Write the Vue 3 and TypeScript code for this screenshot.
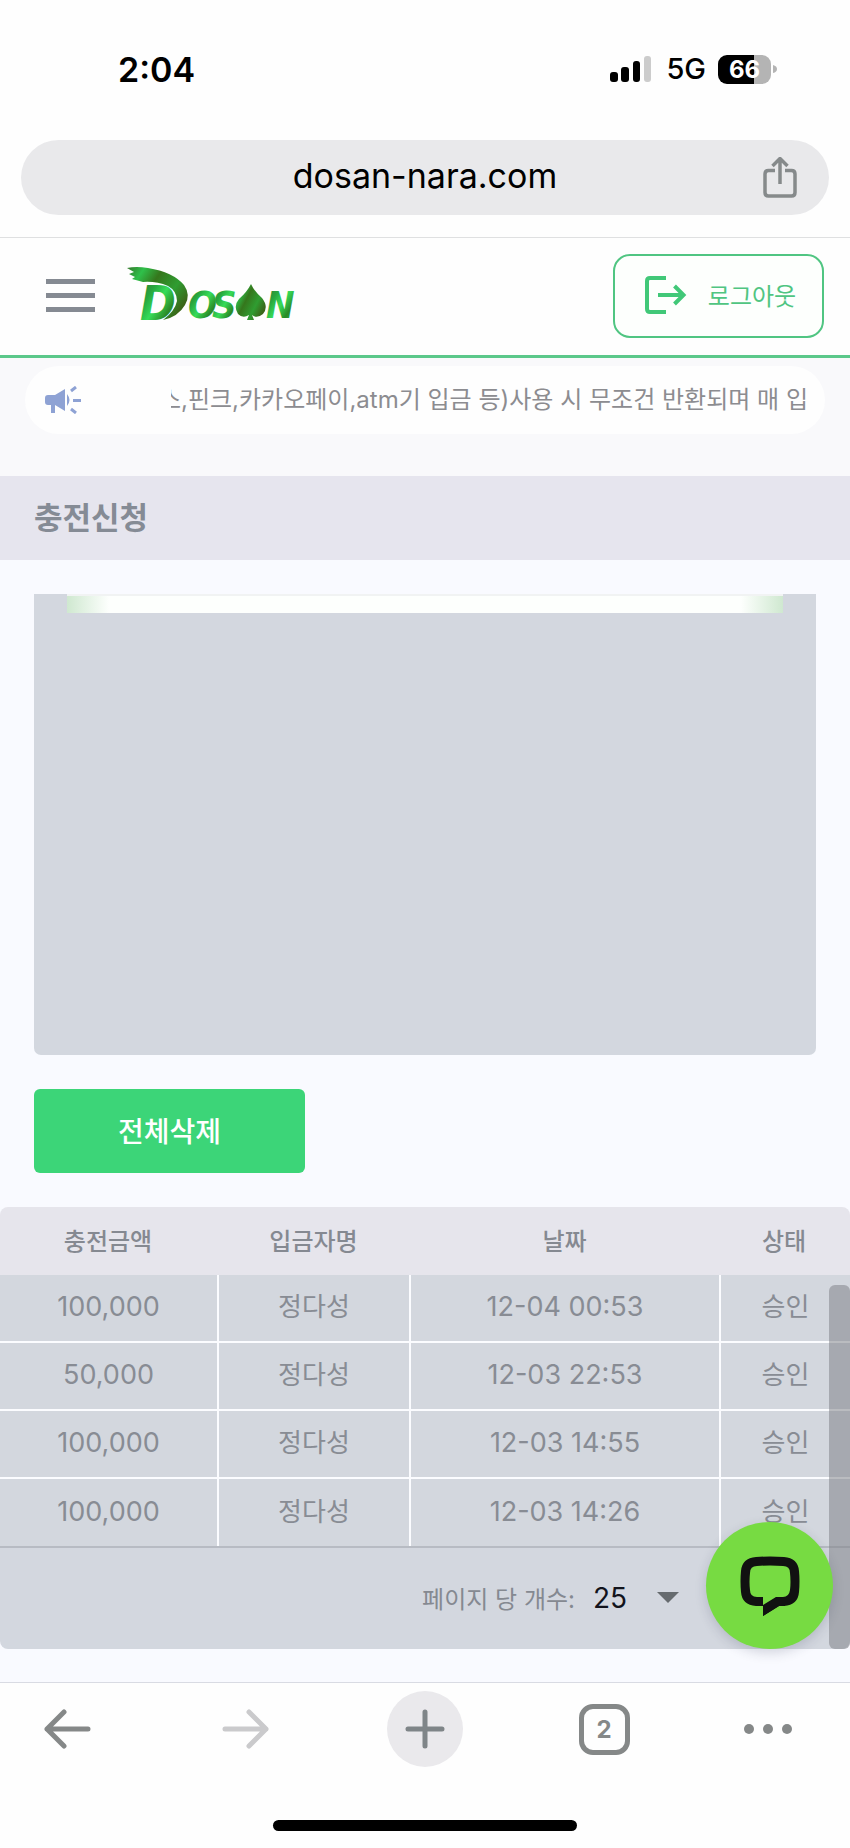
<script setup lang="ts">
import { ref } from 'vue'

interface Deposit {
  amount: string
  name: string
  date: string
  status: string
}

const deposits: Deposit[] = [
  { amount: '100,000', name: '정다성', date: '12-04 00:53', status: '승인' },
  { amount: '50,000', name: '정다성', date: '12-03 22:53', status: '승인' },
  { amount: '100,000', name: '정다성', date: '12-03 14:55', status: '승인' },
  { amount: '100,000', name: '정다성', date: '12-03 14:26', status: '승인' },
]

const pageSize = ref('25')
</script>

<template>
  <div class="phone">
    <div class="status-bar">
      <span class="clock">2:04</span>
      <div class="status-icons">
        <svg class="signal" width="42" height="28" viewBox="0 0 42 28" aria-hidden="true">
          <rect x="0" y="17" width="8" height="10" rx="3" fill="#000" />
          <rect x="11" y="12" width="8" height="15" rx="3" fill="#000" />
          <rect x="23" y="6" width="7" height="21" rx="3" fill="#000" />
          <rect x="34" y="1" width="7" height="26" rx="3" fill="#ccc" />
        </svg>
        <span class="network">5G</span>
        <div class="battery"><span class="battery-level">66</span></div>
        <svg width="4" height="10" viewBox="0 0 4 10" aria-hidden="true"><path d="M0 1Q4 2 4 5T0 9Z" fill="#b4b4b4" /></svg>
      </div>
    </div>

    <div class="address-row">
      <div class="address">
        <span class="host">dosan-nara.com</span>
        <button class="icon-button share" type="button" aria-label="공유">
          <svg width="34" height="42" viewBox="0 0 34 42" fill="none" stroke="#868a8b" stroke-width="3.500" stroke-linejoin="round">
            <path d="M12 13.500H5.500Q2 13.500 2 17V35.500Q2 39 5.500 39H28.500Q32 39 32 35.500V17Q32 13.500 28.500 13.500H22" />
            <path d="M17 27V2M9.500 9 17 1.500 24.500 9" />
          </svg>
        </button>
      </div>
    </div>

    <header class="site-header">
      <button class="icon-button menu" type="button" aria-label="메뉴">
        <svg width="49" height="33" viewBox="0 0 49 33" fill="#858a92"><path d="M0 0H49V5H0ZM0 14H49V19H0ZM0 28H49V33H0Z" /></svg>
      </button>
      <a class="logo" href="#" aria-label="Dosan">
        <svg width="180" height="70" viewBox="0 -7 180 70">
          <defs>
            <linearGradient id="leaf" x1="0" y1="0" x2="1" y2="1">
              <stop offset="0" stop-color="#35702a" />
              <stop offset="0.3" stop-color="#27a63f" />
              <stop offset="0.5" stop-color="#37dc58" />
              <stop offset="0.72" stop-color="#2b8a26" />
              <stop offset="1" stop-color="#31cf4e" />
            </linearGradient>
            <linearGradient id="brush" x1="0" y1="0" x2="1" y2="0.6">
              <stop offset="0" stop-color="#35752a" />
              <stop offset="0.22" stop-color="#2fc04a" />
              <stop offset="0.45" stop-color="#35761c" />
              <stop offset="0.75" stop-color="#2f9d31" />
              <stop offset="1" stop-color="#3b6619" />
            </linearGradient>
          </defs>
          <text class="logo-initial" x="14" y="54" fill="url(#leaf)">D</text>
          <path d="M1 2Q10 0 22 2Q47 6 58 19Q65 29 59 39Q52 51 37 54Q49 45 51 35Q51 25 42 20Q30 15 17 16L6 13L9 11L3 8L8 6Z" fill="url(#brush)" />
          <text class="logo-text" x="62" y="52" fill="url(#leaf)">O</text>
          <text class="logo-text" x="86" y="52" fill="url(#leaf)">S</text>
          <path d="M125 18Q128 25 136 32Q143 41 137 48Q131 53 126 49L128 54H121L123 49Q117 53 112 48Q107 40 113 33Q121 26 125 18Z" fill="url(#brush)" />
          <text class="logo-text" x="140" y="52" fill="url(#leaf)">N</text>
        </svg>
      </a>
      <button class="logout" type="button">
        <svg width="42" height="38" viewBox="0 0 42 38" fill="none" stroke="#41c878" stroke-width="4">
          <path d="M21 2H5Q2 2 2 5V33Q2 36 5 36H21" /><path d="M13 19H38M29.500 10 38.500 19 29.500 28" />
        </svg>
        <span>로그아웃</span>
      </button>
    </header>

    <main>
      <div class="notice-area">
        <div class="notice">
          <svg class="horn" width="36" height="28" viewBox="0 0 36 28" fill="#8ea2d4">
            <path d="M3 9H10L20 3V25L10 19V27H6V19H3Q0 19 0 16V12Q0 9 3 9ZM22 8Q27 14 22 20Z" />
            <path d="M26 5 31 1M28 14.500H36M26 23 31 27" stroke="#8ea2d4" stroke-width="3" />
          </svg>
          <p class="ticker"><span>스,핀크,카카오페이,atm기 입금 등)사용 시 무조건 반환되며 매 입</span></p>
        </div>
      </div>

      <h1 class="page-title">충전신청</h1>

      <div class="content">
        <div class="panel"><div class="panel-glow"></div></div>
        <button class="delete-all" type="button">전체삭제</button>
      </div>

      <section class="history">
        <table>
          <colgroup><col class="c-amount" /><col class="c-name" /><col class="c-date" /><col class="c-status" /></colgroup>
          <thead>
            <tr><th scope="col">충전금액</th><th scope="col">입금자명</th><th scope="col">날짜</th><th scope="col">상태</th></tr>
          </thead>
          <tbody>
            <tr v-for="(d, i) in deposits" :key="i">
              <td class="number">{{ d.amount }}</td>
              <td>{{ d.name }}</td>
              <td class="number">{{ d.date }}</td>
              <td>{{ d.status }}</td>
            </tr>
          </tbody>
        </table>
        <div class="pager">
          <label for="page-size">페이지 당 개수:</label>
          <div class="select-wrap">
            <select id="page-size" v-model="pageSize">
              <option>10</option>
              <option>25</option>
              <option>50</option>
            </select>
            <svg width="22" height="12" viewBox="0 0 22 12" aria-hidden="true"><path d="M0 0H22L11 11Z" fill="#666b6f" /></svg>
          </div>
        </div>
        <div class="scroll-thumb"></div>
        <button class="chat" type="button" aria-label="채팅">
          <svg width="60" height="60" viewBox="0 0 60 60">
            <path d="M16 1Q30 0 44 1Q58 2 59 15Q60 25 59 36Q58 49 44 50H39L23 60V41H32L23 60V50H16Q2 49 1 36Q0 25 1 15Q2 2 16 1Z" fill="#111" />
            <path d="M17 10Q30 9 43 10Q50 10 50 17Q51 26 50 34Q49 41 43 41H36L23 49V41H17Q10 41 10 34Q9 26 10 17Q10 10 17 10Z" fill="#77db42" />
            <path d="M23 41V60L39 50H45V41H37L23 50Z" fill="#111" />
          </svg>
        </button>
      </section>
    </main>

    <footer class="browser-bar">
      <nav class="tools" aria-label="브라우저">
        <button class="icon-button tool" type="button" aria-label="뒤로">
          <svg width="48" height="40" viewBox="0 0 48 40" fill="none" stroke="#858888" stroke-width="5" stroke-linecap="round" stroke-linejoin="round"><path d="M45 20H4M21 3 4 20 21 37" /></svg>
        </button>
        <button class="icon-button tool" type="button" aria-label="앞으로">
          <svg width="48" height="40" viewBox="0 0 48 40" fill="none" stroke="#cacacc" stroke-width="5" stroke-linecap="round" stroke-linejoin="round"><path d="M3 20H44M27 3 44 20 27 37" /></svg>
        </button>
        <button class="icon-button tool add" type="button" aria-label="새 탭">
          <svg width="40" height="40" viewBox="0 0 40 40" fill="none" stroke="#7f8588" stroke-width="5" stroke-linecap="round"><path d="M3 20H37M20 3V37" /></svg>
        </button>
        <button class="icon-button tool" type="button" aria-label="탭 2개"><span class="tabs">2</span></button>
        <button class="icon-button tool more" type="button" aria-label="더보기">
          <svg width="48" height="10" viewBox="0 0 48 10" fill="#858888"><circle cx="5" cy="5" r="5" /><circle cx="24" cy="5" r="5" /><circle cx="43" cy="5" r="5" /></svg>
        </button>
      </nav>
      <div class="home-indicator"></div>
    </footer>
  </div>
</template>

<style>
body {
  margin: 0;
  background: #fefefe;
}
</style>

<style scoped>
.phone,
.phone button,
.phone select {
  font-family: Inter, "Noto Sans CJK KR", sans-serif;
}

.phone {
  min-height: 100vh;
  display: flex;
  flex-direction: column;
  color: #858991;
}

.phone * {
  box-sizing: border-box;
}

svg {
  display: block;
  flex: none;
}

button {
  padding: 0;
  border: 0;
  cursor: pointer;
}

.icon-button {
  display: flex;
  align-items: center;
  justify-content: center;
  background: none;
}

.status-bar {
  height: 140px;
  padding: 0 73px 2px 118px;
  display: flex;
  align-items: center;
  justify-content: space-between;
  color: #000;
}

.clock {
  font-size: 34px;
  font-weight: 600;
}

.status-icons {
  display: flex;
  align-items: center;
  gap: 2px;
}

.signal {
  margin-right: 12px;
}

.network {
  font-size: 29px;
  font-weight: 500;
  line-height: 30px;
  margin-right: 10px;
}

.battery {
  width: 53px;
  height: 29px;
  border-radius: 9px;
  display: flex;
  align-items: center;
  justify-content: center;
  background: linear-gradient(90deg, #000 68%, #b4b4b4 68%);
}

.battery-level {
  color: #fff;
  font-size: 24px;
  font-weight: 700;
  line-height: 29px;
}

.address-row {
  padding: 0 21px 22px;
  border-bottom: 1px solid #dfe0e1;
}

.address {
  height: 75px;
  border-radius: 38px;
  background: #e9e9eb;
  display: grid;
  grid-template-columns: 1fr auto 1fr;
  align-items: center;
}

.host {
  grid-column: 2;
  padding-bottom: 4px;
  color: #000;
  font-size: 34px;
  line-height: 40px;
}

.share {
  justify-self: end;
  margin-right: 32px;
}

.site-header {
  height: 120px;
  padding: 0 26px 2px 46px;
  border-bottom: 3px solid #5bc88a;
  background: #fefefe;
  display: flex;
  align-items: center;
}

.logo {
  margin-left: 31px;
  padding-bottom: 4px;
}

.logo-initial {
  font: italic 700 48px "DejaVu Sans Condensed", "DejaVu Sans", sans-serif;
}

.logo-text {
  font: italic 700 38px "Liberation Sans Narrow", "DejaVu Sans Condensed", sans-serif;
}

.logout {
  margin-left: auto;
  width: 211px;
  height: 84px;
  padding: 0 0 2px 4px;
  border: 2px solid #50c582;
  border-radius: 17px;
  background: #fdfffd;
  color: #50c582;
  font-size: 24px;
  display: flex;
  align-items: center;
  justify-content: center;
  gap: 21px;
}

main {
  background: #f9faff;
}

.notice-area {
  padding: 8px 25px 42px;
  background: #f9f9fb;
}

.notice {
  height: 68px;
  padding: 0 17px 0 20px;
  border-radius: 34px;
  background: #fefefe;
  display: flex;
  align-items: center;
}

.ticker {
  flex: 1;
  min-width: 0;
  margin: 0 0 0 90px;
  overflow: hidden;
  display: flex;
  justify-content: flex-end;
  color: #8c8c90;
  font-size: 24px;
  line-height: 36px;
  white-space: nowrap;
}

.page-title {
  margin: 0;
  padding: 0 34px;
  background: #e6e5ee;
  color: #858b95;
  font-size: 31px;
  font-weight: 700;
  line-height: 84px;
}

.content {
  padding: 34px;
}

.panel {
  height: 461px;
  padding: 0 33px;
  border-radius: 0 0 7px 7px;
  background: #d3d7df;
}

.panel-glow {
  height: 19px;
  border-top: 2px solid #f1f3f3;
  background: linear-gradient(90deg, #cfe8d0, #fdfffd 42px, #fdfffd calc(100% - 42px), #cfe8d0);
}

.delete-all {
  display: block;
  width: 271px;
  height: 84px;
  margin-top: 34px;
  padding-bottom: 3px;
  border-radius: 6px;
  background: #3cd578;
  color: #fff;
  font-size: 28px;
  font-weight: 500;
}

.history {
  position: relative;
  margin-bottom: 33px;
}

table {
  width: 100%;
  table-layout: fixed;
  border-collapse: separate;
  border-spacing: 0;
}

.c-amount {
  width: 219px;
}

.c-name {
  width: 192px;
}

.c-date {
  width: 310px;
}

th {
  height: 68px;
  padding: 0 3px 4px 0;
  background: #e6e5ec;
  font-size: 24px;
  font-weight: 500;
}

th:first-child {
  border-top-left-radius: 8px;
}

th:last-child {
  border-top-right-radius: 8px;
}

td {
  height: 68px;
  padding: 0 0 2px;
  border-right: 2px solid #fbfcff;
  border-bottom: 2px solid #fbfcff;
  background: #d3d7de;
  color: #888c94;
  font-size: 26px;
  line-height: 36px;
  text-align: center;
}

.number {
  font-size: 27px;
}

td:last-child {
  border-right: 0;
}

tbody tr:last-child td {
  height: 67px;
  border-bottom: 0;
}

.pager {
  height: 103px;
  padding: 0 171px 2px 0;
  border-top: 2px solid #b7bbc3;
  border-radius: 0 0 8px 8px;
  background: #d3d7df;
  display: flex;
  align-items: center;
  justify-content: flex-end;
  gap: 18px;
  font-size: 24px;
}

.select-wrap {
  display: flex;
  align-items: center;
}

.select-wrap select {
  width: 64px;
  padding: 0;
  border: 0;
  appearance: none;
  background: none;
  color: #12131c;
  font-size: 28px;
}

.scroll-thumb {
  position: absolute;
  top: 78px;
  right: 0;
  bottom: 0;
  width: 21px;
  border-radius: 6px;
  background: rgba(122, 124, 130, 0.5);
}

.chat {
  position: absolute;
  right: 17px;
  bottom: 0;
  width: 127px;
  height: 127px;
  border-radius: 50%;
  background: #77db42;
  box-shadow: 0 4px 12px rgba(40, 45, 70, 0.18);
  display: flex;
  align-items: center;
  justify-content: center;
}

.browser-bar {
  border-top: 1px solid #d9dbe3;
  background: #fefefe;
}

.tools {
  padding: 8px 60px 0 29px;
  display: flex;
  justify-content: space-between;
}

.tool {
  width: 76px;
  height: 76px;
}

.more {
  width: 45px;
}

.add {
  border-radius: 50%;
  background: #eae9ec;
}

.tabs {
  width: 51px;
  height: 51px;
  border: 5px solid #858888;
  border-radius: 14px;
  color: #858888;
  font-size: 24px;
  font-weight: 700;
  line-height: 42px;
}

.home-indicator {
  width: 304px;
  height: 11px;
  margin: 53px auto 17px;
  border-radius: 6px;
  background: #000;
}
</style>
